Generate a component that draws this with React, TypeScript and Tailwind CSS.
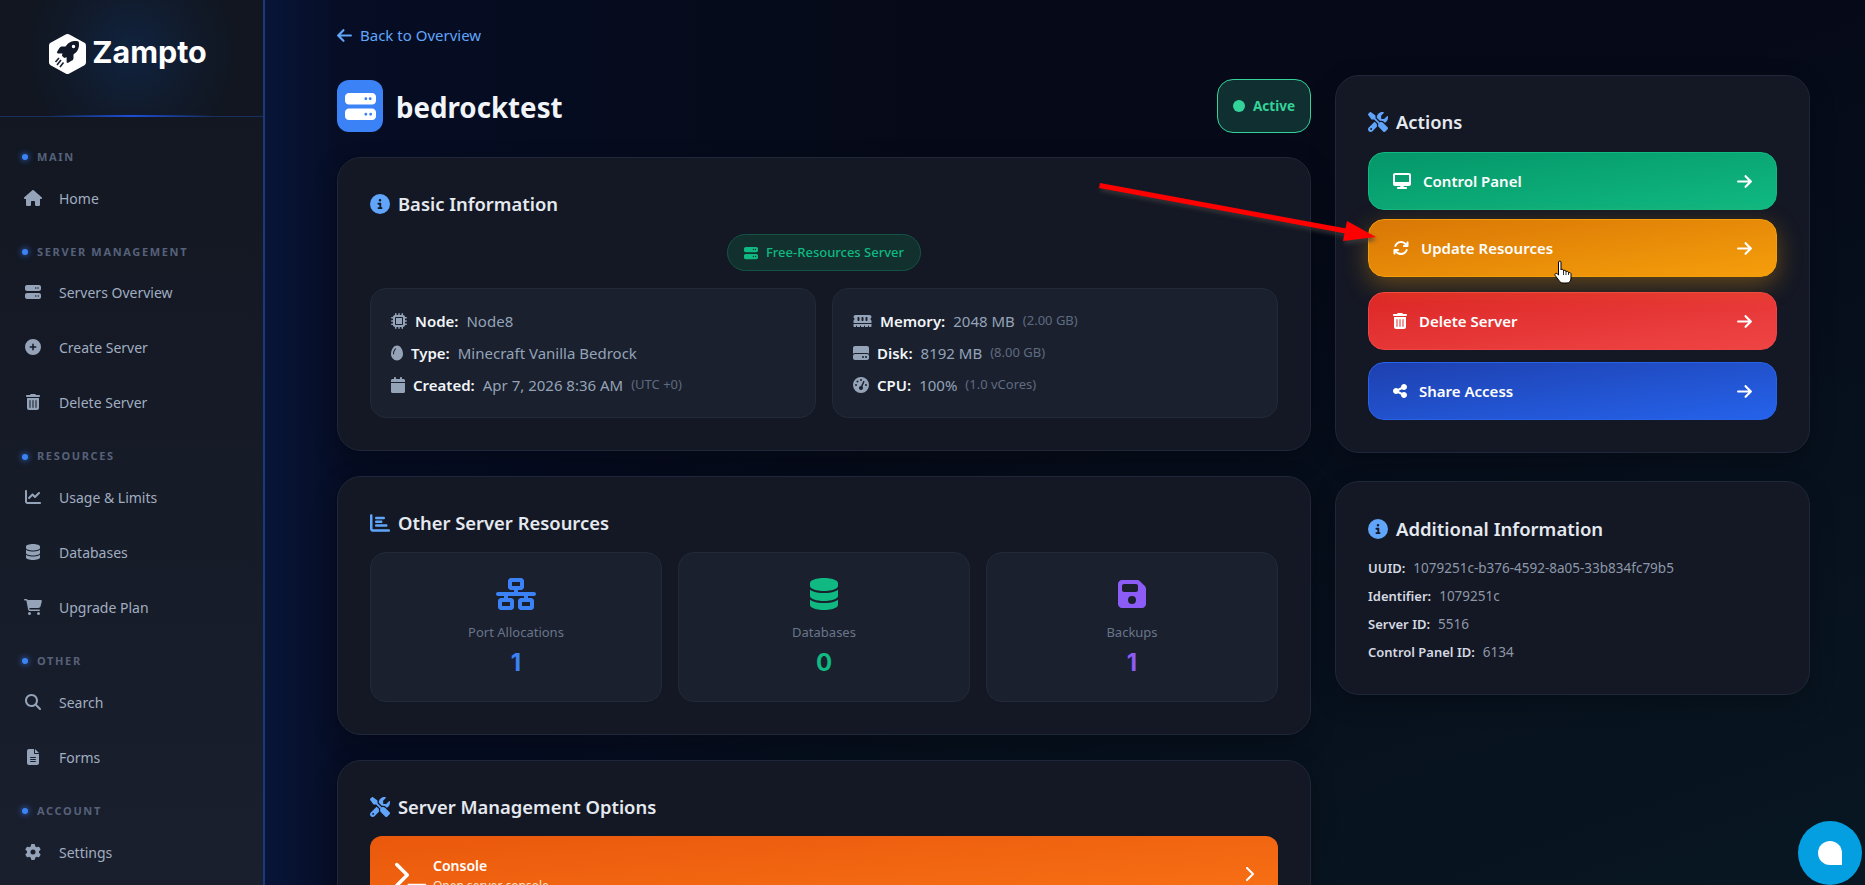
import type { ReactNode } from 'react';
import {
    FaHouse, FaServer, FaCirclePlus, FaTrashCan, FaChartLine, FaDatabase, FaCartShopping,
    FaMagnifyingGlass, FaFileLines, FaGear, FaArrowLeft, FaArrowRight, FaCircleInfo, FaMicrochip, FaEgg,
    FaCalendar, FaMemory, FaHardDrive, FaGaugeHigh, FaChartBar, FaNetworkWired, FaFloppyDisk, FaScrewdriverWrench,
    FaDesktop, FaArrowsRotate, FaShareNodes, FaTerminal, FaChevronRight, FaRocket,
} from 'react-icons/fa6';

// react-icons draws every glyph in a 1em square, so wide/narrow ones get their real box here
const nav = [
    { title: 'Main', items: [{ icon: FaHouse, size: 'w-[18px] h-[16px]', label: 'Home' }] },
    {
        title: 'Server Management',
        items: [
            { icon: FaServer, size: 'w-[16px] h-[16px]', label: 'Servers Overview' },
            { icon: FaCirclePlus, size: 'w-[16px] h-[16px]', label: 'Create Server' },
            { icon: FaTrashCan, size: 'w-[14px] h-[16px]', label: 'Delete Server' },
        ],
    },
    {
        title: 'Resources',
        items: [
            { icon: FaChartLine, size: 'w-[16px] h-[16px]', label: 'Usage & Limits' },
            { icon: FaDatabase, size: 'w-[14px] h-[16px]', label: 'Databases' },
            { icon: FaCartShopping, size: 'w-[18px] h-[16px]', label: 'Upgrade Plan' },
        ],
    },
    {
        title: 'Other',
        items: [
            { icon: FaMagnifyingGlass, size: 'w-[16px] h-[16px]', label: 'Search' },
            { icon: FaFileLines, size: 'w-[12px] h-[16px]', label: 'Forms' },
        ],
    },
    { title: 'Account', items: [{ icon: FaGear, size: 'w-[16px] h-[16px]', label: 'Settings' }] },
];

function Logo() {
    return (
        <div className="flex items-center gap-[6px] pr-[7px]">
            <div className="relative w-[37px] h-[40px]">
                <svg viewBox="0 0 37 40" className="w-[37px] h-[40px]">
                    <path d="M18.5 3 L34 11.5 V28.5 L18.5 37 L3 28.5 V11.5 Z" fill="#fff" stroke="#fff" strokeWidth="6" strokeLinejoin="round" />
                    <path d="M8 31 L12 26 M11 33 L14.5 28.5 M6.5 28 L10 24" stroke="#1a2233" strokeWidth="1.6" />
                </svg>
                <FaRocket className="absolute left-[8px] top-[7px] w-[22px] h-[22px] text-[#111827]" />
            </div>
            <span className="font-['Inter'] font-bold text-[30.5px] leading-none text-white pb-[3px]">Zampto</span>
        </div>
    );
}

function Sidebar() {
    return (
        <aside className="w-[265px] shrink-0 h-full flex flex-col border-r-2 border-[#1c3a7a] bg-gradient-to-b from-[#111620] to-[#1a1f2e]">
            <div className="relative h-[117px] shrink-0 flex items-center justify-center pb-[9px] border-b border-[#17305f] bg-[radial-gradient(circle_at_50%_45%,#10233f_0%,#111a2a_45%,#111620_75%)]">
                <Logo />
                <div className="absolute left-[50px] right-[50px] bottom-[-1px] h-[2px] bg-gradient-to-r from-transparent via-[#1d4ed8] to-transparent" />
            </div>
            <nav className="pt-[32px]">
                {nav.map((section, i) => (
                    <div key={section.title} className={i > 0 ? 'mt-[22.8px]' : ''}>
                        <div className="h-[16px] flex items-center pl-[22px] gap-[9px]">
                            <span className="w-[6px] h-[6px] rounded-full bg-[#3b82f6] shadow-[0_0_6px_#3b82f6]" />
                            <span className="text-[11px] font-bold uppercase tracking-[1.65px] text-[#56617a]">{section.title}</span>
                        </div>
                        <div className="mt-[9px] flex flex-col gap-[8px]">
                            {section.items.map(({ icon: Icon, size, label }) => (
                                <div key={label} className="h-[47px] flex items-center pl-[24px] gap-[17px]">
                                    <span className="w-[18px] flex justify-center">
                                        <Icon className={`text-[#94a3b8] ${size}`} />
                                    </span>
                                    <span className="text-[14px] text-[#a0aec0] pt-[1px]">{label}</span>
                                </div>
                            ))}
                        </div>
                    </div>
                ))}
            </nav>
        </aside>
    );
}

function Card({ children, className = '' }: { children: ReactNode; className?: string }) {
    return (
        <section className={`rounded-[24px] border border-[#1f2738] bg-[#141824] p-[32px] shadow-[0_8px_24px_rgba(0,0,0,0.25)] ${className}`}>
            {children}
        </section>
    );
}

function CardTitle({ icon, children }: { icon: ReactNode; children: ReactNode }) {
    return (
        <h2 className="h-[28px] flex items-center gap-[8px] text-[18.4px] font-semibold text-[#e5e9f0]">
            <span className="w-[20px] flex justify-center text-[#60a5fa] text-[20px]">{icon}</span>
            {children}
        </h2>
    );
}

function InfoRow({ icon, label, value, note }: { icon: ReactNode; label: string; value: string; note?: string }) {
    return (
        <div className="h-[32px] flex items-center text-[15px]">
            <span className="mr-[8px] text-[#94a3b8] flex">{icon}</span>
            <span className="font-semibold text-[#f1f5f9] mr-[8px]">{label}</span>
            <span className="text-[#94a3b8] mr-[8px]">{value}</span>
            {note && <span className="text-[13px] text-[#5f6b80]">{note}</span>}
        </div>
    );
}

function Stat({ icon, label, value, color }: { icon: ReactNode; label: string; value: string; color: string }) {
    return (
        <div className="h-[150px] rounded-[16px] border border-[#222a3a] bg-[#1a202d] flex flex-col items-center pt-[24px]">
            <span className={`h-[34px] flex items-center ${color}`}>{icon}</span>
            <span className="mt-[12px] text-[13px] text-[#69758a]">{label}</span>
            <span className={`mt-[2px] text-[24px] font-bold font-['Inter'] ${color}`}>{value}</span>
        </div>
    );
}

const actions = [
    { icon: FaDesktop, size: 'w-[18px] h-[16px]', label: 'Control Panel', bg: 'bg-gradient-to-br from-[#059669] to-[#10b981] border-[#10b981]', extra: '' },
    { icon: FaArrowsRotate, size: 'w-[16px] h-[16px]', label: 'Update Resources', bg: 'bg-gradient-to-br from-[#d97706] to-[#f59e0b] border-[#f59e0b]', extra: '-translate-y-[3px] shadow-[0_8px_24px_rgba(245,158,11,0.35)]' },
    { icon: FaTrashCan, size: 'w-[14px] h-[16px]', label: 'Delete Server', bg: 'bg-gradient-to-br from-[#dc2626] to-[#ef4444] border-[#ef4444]', extra: '' },
    { icon: FaShareNodes, size: 'w-[14px] h-[16px]', label: 'Share Access', bg: 'bg-gradient-to-br from-[#1e40af] to-[#2563eb] border-[#2563eb]', extra: '' },
];

function Actions() {
    return (
        <Card className="border-[#1b2c55]">
            <CardTitle icon={<FaScrewdriverWrench />}>Actions</CardTitle>
            <div className="mt-[16px] flex flex-col gap-[12px]">
                {actions.map(({ icon: Icon, size, label, bg, extra }) => (
                    <div key={label} className={`h-[58px] rounded-[16px] border flex items-center pl-[24px] pr-[24px] ${bg} ${extra}`}>
                        <Icon className={`text-white mr-[12px] ${size}`} />
                        <span className="text-[15px] font-semibold text-white">{label}</span>
                        <FaArrowRight className="ml-auto text-white w-[15px] h-[17px]" />
                    </div>
                ))}
            </div>
        </Card>
    );
}

function AdditionalInfo() {
    const rows = [
        ['UUID:', '1079251c-b376-4592-8a05-33b834fc79b5'],
        ['Identifier:', '1079251c'],
        ['Server ID:', '5516'],
        ['Control Panel ID:', '6134'],
    ];
    return (
        <Card>
            <h2 className="h-[30px] flex items-center gap-[8px] text-[18.5px] font-semibold text-[#e5e9f0]">
                <FaCircleInfo className="text-[#60a5fa] text-[20px]" />
                Additional Information
            </h2>
            <div className="mt-[14px] flex flex-col gap-[8px]">
                {rows.map(([k, v]) => (
                    <div key={k} className="h-[20px] flex items-center gap-[8px] pt-[1px]">
                        <span className="text-[13px] font-semibold text-[#d5dae3]">{k}</span>
                        <span className="text-[13.5px] text-[#8c97a8]">{v}</span>
                    </div>
                ))}
            </div>
        </Card>
    );
}

function Overlay() {
    return (
        <>
            {/* annotation arrow drawn on top of the screenshot */}
            <svg width="1865" height="885" className="absolute left-0 top-0 pointer-events-none drop-shadow-[1px_3px_2px_rgba(60,60,60,0.8)]">
                <polygon points="1100,183 1349,229 1348,234 1099,188" fill="#ff0000" />
                <polygon points="1347,221 1376,237 1343,241" fill="#ff0000" />
            </svg>
            {/* hand cursor */}
            <svg viewBox="0 0 18 24" className="absolute left-[1554px] top-[260px] w-[18px] h-[24px] pointer-events-none">
                <path
                    d="M4.5 2C4.5.8 7 .8 7 2V10C7 9 9.5 9 9.5 10.5V11C9.5 10 12 10 12 11.5V12C12 11 14.5 11 14.5 12.5V13C14.5 12.3 17 12.3 17 14V18C17 21 15.5 23 13 23H9C7 23 6 22 5 20.5L1.2 15.5C.2 14 2 12.5 3.2 13.8L4.5 15Z"
                    fill="#fff"
                    stroke="#000"
                    strokeWidth="1"
                />
                <path d="M9.5 11V15M12 12V15M14.5 13V15" stroke="#000" strokeWidth=".8" />
            </svg>
            {/* chat bubble */}
            <div className="absolute right-[3px] bottom-0 w-[64px] h-[64px] rounded-full bg-[#039fe0] flex items-center justify-center">
                <div className="w-[24px] h-[24px] bg-white rounded-[50%_50%_0_50%]" />
            </div>
        </>
    );
}

export default function App() {
    return (
        <div className="relative h-screen w-full overflow-hidden flex font-['Noto_Sans',sans-serif] bg-[#060a18]">
            <Sidebar />
            <main className="flex-1 h-full overflow-hidden flex gap-[24px] pl-[72px] bg-[linear-gradient(90deg,#081538_0%,#060d24_5%,rgba(6,10,24,0)_40%),linear-gradient(160deg,#060a18_0%,#060a18_40%,#081722_100%)]">
                <div className="w-[974px] shrink-0 pt-[23px]">
                    <div className="h-[24px] flex items-center gap-[8px] text-[15px] text-[#60a5fa]">
                        <FaArrowLeft className="w-[15px] h-[17px]" />
                        Back to Overview
                    </div>
                    <div className="mt-[32px] mb-[24px] flex items-center justify-between">
                        <div className="flex items-center gap-[13px]">
                            <div className="w-[46px] h-[52px] rounded-[12px] bg-[#3b82f6] flex items-center justify-center">
                                <FaServer className="text-white text-[31px]" />
                            </div>
                            <h1 className="pt-[3px] text-[27.7px] font-bold text-[#f1f5f9]">bedrocktest</h1>
                        </div>
                        <div className="w-[94px] h-[54px] rounded-[16px] border border-[#34d399] bg-[#0f2f30] flex items-center justify-center gap-[8px] text-[13.5px] font-bold text-[#34d399]">
                            <span className="w-[12px] h-[12px] rounded-full bg-[#34d399]" />
                            Active
                        </div>
                    </div>

                    <div className="flex flex-col gap-[25px]">
                        <Card>
                            <CardTitle icon={<FaCircleInfo />}>Basic Information</CardTitle>
                            <div className="mt-[16px] flex justify-center">
                                <div className="h-[37px] px-[16px] rounded-full border border-[#135445] bg-[#11302e] flex items-center gap-[8px] text-[13px] font-medium text-[#10b981]">
                                    <FaServer className="text-[14px]" />
                                    Free-Resources Server
                                </div>
                            </div>
                            <div className="mt-[17px] grid grid-cols-2 gap-[16px]">
                                <div className="h-[130px] rounded-[16px] border border-[#222a3a] bg-[#1a202d] px-[20px] py-[16px]">
                                    <InfoRow icon={<FaMicrochip className="w-[16px] h-[16px]" />} label="Node:" value="Node8" />
                                    <InfoRow icon={<FaEgg className="w-[12px] h-[16px]" />} label="Type:" value="Minecraft Vanilla Bedrock" />
                                    <InfoRow icon={<FaCalendar className="w-[14px] h-[16px]" />} label="Created:" value="Apr 7, 2026 8:36 AM" note="(UTC +0)" />
                                </div>
                                <div className="h-[130px] rounded-[16px] border border-[#222a3a] bg-[#1a202d] px-[20px] py-[16px]">
                                    <InfoRow icon={<FaMemory className="w-[19px] h-[16px]" />} label="Memory:" value="2048 MB" note="(2.00 GB)" />
                                    <InfoRow icon={<FaHardDrive className="w-[16px] h-[16px]" />} label="Disk:" value="8192 MB" note="(8.00 GB)" />
                                    <InfoRow icon={<FaGaugeHigh className="w-[16px] h-[16px]" />} label="CPU:" value="100%" note="(1.0 vCores)" />
                                </div>
                            </div>
                        </Card>

                        <Card>
                            <CardTitle icon={<FaChartBar />}>Other Server Resources</CardTitle>
                            <div className="mt-[15px] grid grid-cols-3 gap-[16px]">
                                <Stat icon={<FaNetworkWired className="w-[40px] h-[32px]" />} label="Port Allocations" value="1" color="text-[#3b82f6]" />
                                <Stat icon={<FaDatabase className="w-[28px] h-[32px]" />} label="Databases" value="0" color="text-[#10b981]" />
                                <Stat icon={<FaFloppyDisk className="w-[28px] h-[32px]" />} label="Backups" value="1" color="text-[#8b5cf6]" />
                            </div>
                        </Card>

                        <Card>
                            <CardTitle icon={<FaScrewdriverWrench />}>Server Management Options</CardTitle>
                            <div className="mt-[15px] h-[76px] rounded-[12px] bg-gradient-to-br from-[#ea580c] to-[#f97316] flex items-center pl-[25px] pr-[24px]">
                                <FaTerminal className="w-[31.5px] h-[28px] mt-[2px] mr-[6.5px] text-white" />
                                <div>
                                    <div className="h-[24px] leading-[26px] text-[14px] font-semibold text-white">Console</div>
                                    <div className="h-[18px] leading-[18px] text-[12px] text-[#ffe4d1]">Open server console</div>
                                </div>
                                <FaChevronRight className="ml-auto text-white w-[10px] h-[16px]" />
                            </div>
                        </Card>
                    </div>
                </div>

                <div className="w-[475px] shrink-0 pt-[75px] flex flex-col gap-[28px]">
                    <Actions />
                    <AdditionalInfo />
                </div>
            </main>
            <Overlay />
        </div>
    );
}
